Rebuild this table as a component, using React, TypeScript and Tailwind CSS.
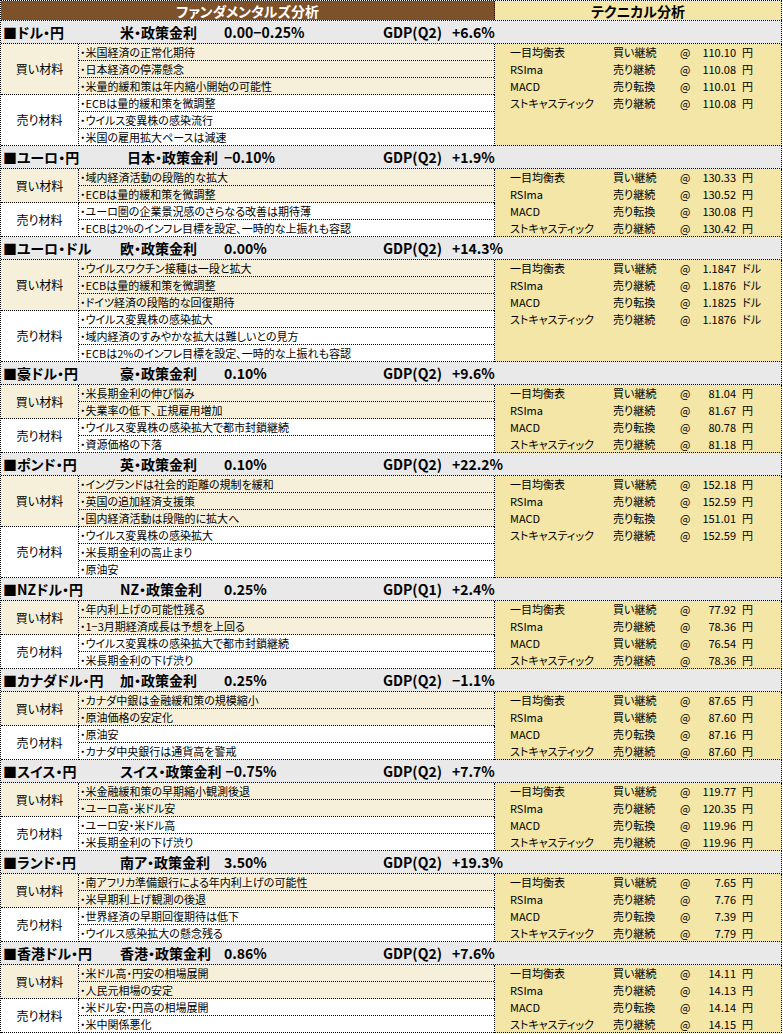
import React from "react";

type Sec = {
  pair: string;
  policy: string;
  rate: string;
  gdpQ: string;
  gdp: string;
  buy: string[];
  sell: string[];
  tech: [string, string, string][];
  unit: string;
  shift?: boolean;
};

const sections: Sec[] = [
  {
    pair: "■ドル・円",
    policy: "米・政策金利",
    rate: "0.00−0.25%",
    gdpQ: "GDP(Q2)",
    gdp: "+6.6%",
    buy: ["米国経済の正常化期待", "日本経済の停滞懸念", "米量的緩和策は年内縮小開始の可能性"],
    sell: ["ECBは量的緩和策を微調整", "ウイルス変異株の感染流行", "米国の雇用拡大ペースは減速"],
    tech: [
      ["一目均衡表", "買い継続", "110.10"],
      ["RSIma", "売り継続", "110.08"],
      ["MACD", "売り転換", "110.01"],
      ["ストキャスティック", "売り継続", "110.08"],
    ],
    unit: "円",
  },
  {
    pair: "■ユーロ・円",
    policy: "日本・政策金利",
    rate: "−0.10%",
    gdpQ: "GDP(Q2)",
    gdp: "+1.9%",
    buy: ["域内経済活動の段階的な拡大", "ECBは量的緩和策を微調整"],
    sell: ["ユーロ圏の企業景況感のさらなる改善は期待薄", "ECBは2%のインフレ目標を設定、一時的な上振れも容認"],
    tech: [
      ["一目均衡表", "買い継続", "130.33"],
      ["RSIma", "売り継続", "130.52"],
      ["MACD", "売り転換", "130.08"],
      ["ストキャスティック", "売り継続", "130.42"],
    ],
    unit: "円",
    shift: true,
  },
  {
    pair: "■ユーロ・ドル",
    policy: "欧・政策金利",
    rate: "0.00%",
    gdpQ: "GDP(Q2)",
    gdp: "+14.3%",
    buy: ["ウイルスワクチン接種は一段と拡大", "ECBは量的緩和策を微調整", "ドイツ経済の段階的な回復期待"],
    sell: ["ウイルス変異株の感染拡大", "域内経済のすみやかな拡大は難しいとの見方", "ECBは2%のインフレ目標を設定、一時的な上振れも容認"],
    tech: [
      ["一目均衡表", "買い継続", "1.1847"],
      ["RSIma", "売り継続", "1.1876"],
      ["MACD", "売り転換", "1.1825"],
      ["ストキャスティック", "売り継続", "1.1876"],
    ],
    unit: "ドル",
  },
  {
    pair: "■豪ドル・円",
    policy: "豪・政策金利",
    rate: "0.10%",
    gdpQ: "GDP(Q2)",
    gdp: "+9.6%",
    buy: ["米長期金利の伸び悩み", "失業率の低下、正規雇用増加"],
    sell: ["ウイルス変異株の感染拡大で都市封鎖継続", "資源価格の下落"],
    tech: [
      ["一目均衡表", "買い継続", "81.04"],
      ["RSIma", "売り継続", "81.67"],
      ["MACD", "売り転換", "80.78"],
      ["ストキャスティック", "売り継続", "81.18"],
    ],
    unit: "円",
  },
  {
    pair: "■ポンド・円",
    policy: "英・政策金利",
    rate: "0.10%",
    gdpQ: "GDP(Q2)",
    gdp: "+22.2%",
    buy: ["イングランドは社会的距離の規制を緩和", "英国の追加経済支援策", "国内経済活動は段階的に拡大へ"],
    sell: ["ウイルス変異株の感染拡大", "米長期金利の高止まり", "原油安"],
    tech: [
      ["一目均衡表", "買い継続", "152.18"],
      ["RSIma", "売り継続", "152.59"],
      ["MACD", "売り転換", "151.01"],
      ["ストキャスティック", "売り継続", "152.59"],
    ],
    unit: "円",
  },
  {
    pair: "■NZドル・円",
    policy: "NZ・政策金利",
    rate: "0.25%",
    gdpQ: "GDP(Q1)",
    gdp: "+2.4%",
    buy: ["年内利上げの可能性残る", "1−3月期経済成長は予想を上回る"],
    sell: ["ウイルス変異株の感染拡大で都市封鎖継続", "米長期金利の下げ渋り"],
    tech: [
      ["一目均衡表", "買い継続", "77.92"],
      ["RSIma", "売り継続", "78.36"],
      ["MACD", "買い継続", "76.54"],
      ["ストキャスティック", "売り継続", "78.36"],
    ],
    unit: "円",
  },
  {
    pair: "■カナダドル・円",
    policy: "加・政策金利",
    rate: "0.25%",
    gdpQ: "GDP(Q2)",
    gdp: "−1.1%",
    buy: ["カナダ中銀は金融緩和策の規模縮小", "原油価格の安定化"],
    sell: ["原油安", "カナダ中央銀行は通貨高を警戒"],
    tech: [
      ["一目均衡表", "買い継続", "87.65"],
      ["RSIma", "買い継続", "87.60"],
      ["MACD", "売り転換", "87.16"],
      ["ストキャスティック", "売り継続", "87.60"],
    ],
    unit: "円",
  },
  {
    pair: "■スイス・円",
    policy: "スイス・政策金利",
    rate: "−0.75%",
    gdpQ: "GDP(Q2)",
    gdp: "+7.7%",
    buy: ["米金融緩和策の早期縮小観測後退", "ユーロ高・米ドル安"],
    sell: ["ユーロ安・米ドル高", "米長期金利の下げ渋り"],
    tech: [
      ["一目均衡表", "買い継続", "119.77"],
      ["RSIma", "売り継続", "120.35"],
      ["MACD", "売り転換", "119.96"],
      ["ストキャスティック", "売り継続", "119.96"],
    ],
    unit: "円",
  },
  {
    pair: "■ランド・円",
    policy: "南ア・政策金利",
    rate: "3.50%",
    gdpQ: "GDP(Q2)",
    gdp: "+19.3%",
    buy: ["南アフリカ準備銀行による年内利上げの可能性", "米早期利上げ観測の後退"],
    sell: ["世界経済の早期回復期待は低下", "ウイルス感染拡大の懸念残る"],
    tech: [
      ["一目均衡表", "買い継続", "7.65"],
      ["RSIma", "売り継続", "7.76"],
      ["MACD", "売り転換", "7.39"],
      ["ストキャスティック", "売り継続", "7.79"],
    ],
    unit: "円",
  },
  {
    pair: "■香港ドル・円",
    policy: "香港・政策金利",
    rate: "0.86%",
    gdpQ: "GDP(Q2)",
    gdp: "+7.6%",
    buy: ["米ドル高・円安の相場展開", "人民元相場の安定"],
    sell: ["米ドル安・円高の相場展開", "米中関係悪化"],
    tech: [
      ["一目均衡表", "買い継続", "14.11"],
      ["RSIma", "売り継続", "14.13"],
      ["MACD", "売り転換", "14.14"],
      ["ストキャスティック", "売り継続", "14.15"],
    ],
    unit: "円",
  },
];

function Group({ label, items, buy }: { label: string; items: string[]; buy: boolean }) {
  const bg = buy ? "bg-[#f6f0da]" : "bg-white";
  return (
    <div className="flex">
      <div
        className={`w-[78px] shrink-0 border-r border-b border-dotted border-black flex items-center justify-center text-[12px] leading-[16px] ${bg}`}
      >
        {label}
      </div>
      <div className="w-[416px] shrink-0 flex flex-col border-r border-dotted border-black">
        {items.map((t, i) => (
          <div
            key={i}
            className={`h-[17px] border-b border-dotted border-black flex items-center pl-[1px] text-[11px] leading-[16px] whitespace-nowrap ${bg}`}
          >
            ・{t}
          </div>
        ))}
      </div>
    </div>
  );
}

function Section({ s }: { s: Sec }) {
  return (
    <div>
      <div className="flex h-[23px] items-center bg-[#e9e9e9] border-b border-r border-dotted border-black font-bold text-[14px] leading-[20px] whitespace-nowrap">
        <div className="w-[382px] shrink-0 flex items-center">
          <div className="w-[119px] shrink-0 pl-[2px]">{s.pair}</div>
          <div className={`min-w-[100px] ${s.shift ? "pl-[7px]" : ""}`}>{s.policy}</div>
          <div className="ml-[4px]">{s.rate}</div>
        </div>
        <div className="w-[69px] shrink-0">{s.gdpQ}</div>
        <div>{s.gdp}</div>
      </div>
      <div className="flex items-stretch">
        <div className="w-[494px] shrink-0 flex flex-col">
          <Group label="買い材料" items={s.buy} buy={true} />
          <Group label="売り材料" items={s.sell} buy={false} />
        </div>
        <div className="w-[287px] shrink-0 bg-[#f3e6a7] border-r border-b border-dotted border-black pl-[15px] flex flex-col text-[11px] leading-[15px]">
          {s.tech.map((t, i) => (
            <div
              key={i}
              className={`${i === 3 ? "h-[16px]" : "h-[17px]"} flex items-center whitespace-nowrap`}
            >
              <div className="w-[103px] shrink-0">{t[0]}</div>
              <div className="w-[67px] shrink-0">{t[1]}</div>
              <div className="w-[20px] shrink-0">@</div>
              <div className="w-[36px] shrink-0 text-right">{t[2]}</div>
              <div className="ml-[6px]">{s.unit}</div>
            </div>
          ))}
        </div>
      </div>
    </div>
  );
}

export default function App() {
  return (
    <div className="w-[782px] border-l border-dotted border-black bg-white text-black font-['Noto_Sans_CJK_JP','Noto_Sans',sans-serif] [font-feature-settings:'palt']">
      <div className="flex h-[21px] border-t border-b border-dotted border-black">
        <div className="w-[494px] shrink-0 bg-[#7d5129] border-r border-dotted border-black flex items-center justify-center text-white font-bold text-[14px] leading-[18px]">
          ファンダメンタルズ分析
        </div>
        <div className="w-[287px] shrink-0 bg-[#f3e6a7] border-r border-dotted border-black flex items-center justify-center font-bold text-[14px] leading-[18px]">
          テクニカル分析
        </div>
      </div>
      {sections.map((s, i) => (
        <Section key={i} s={s} />
      ))}
    </div>
  );
}
